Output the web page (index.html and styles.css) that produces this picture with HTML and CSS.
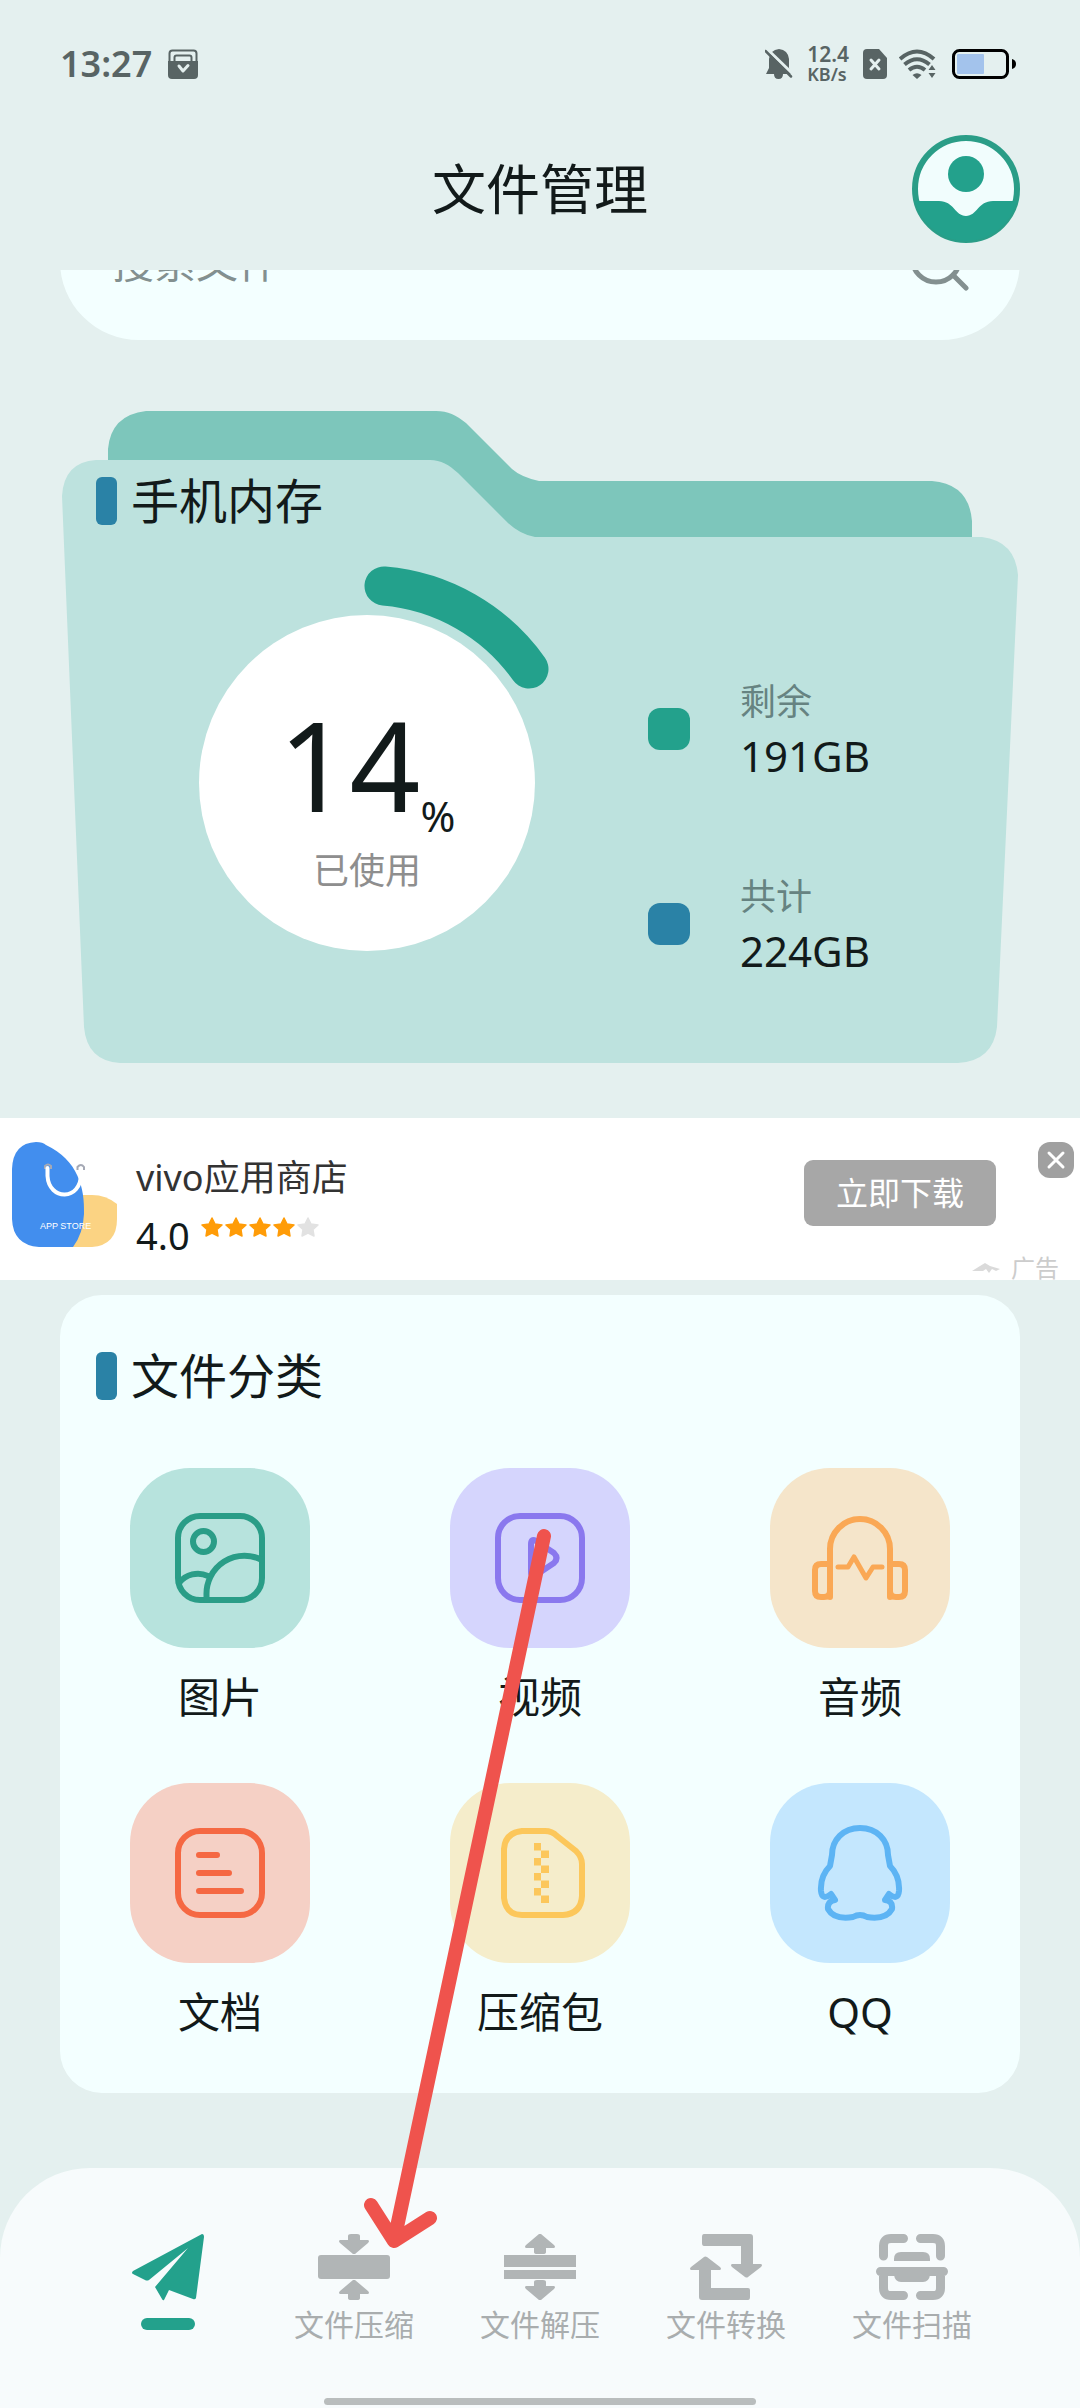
FILE: index.html
```html
<!DOCTYPE html>
<html lang="zh-CN">
<head>
<meta charset="utf-8">
<meta name="viewport" content="width=device-width, initial-scale=1">
<title>文件管理</title>
<link rel="stylesheet" href="styles.css">
</head>
<body>
<div class="page">
  <header class="top">
    <div class="status">
      <span class="time">13:27</span>
      <svg class="status-app" width="30" height="30" viewBox="0 0 30 30" aria-hidden="true">
        <path d="M1.5 14V4.5Q1.5 1.5 4.5 1.5H25.5Q28.5 1.5 28.5 4.5V14M6.5 14V8.5Q6.5 6.5 8.5 6.5H21.5Q23.5 6.5 23.5 8.5V14" fill="none" stroke="#586464" stroke-width="2"/>
        <path d="M0 12H30V26Q30 30 26 30H4Q0 30 0 26Z" fill="#586464"/>
        <path d="M11 17L15 22L20 16.5" fill="none" stroke="#e4f0ef" stroke-width="3" stroke-linecap="round" stroke-linejoin="round"/>
      </svg>
      <span class="status-space"></span>
      <svg width="28" height="30" viewBox="0 0 28 30" aria-hidden="true">
        <path d="M3 25H1L4 19V10Q5 1 14 0Q23 1 24 10V19L26 25H18Q18 30 13.5 30Q9 30 9 25Z" fill="#586464"/>
        <path d="M2 0L29 26" stroke="#e4f0ef" stroke-width="3"/>
        <path d="M0.5 2L26 27.5" stroke="#586464" stroke-width="2.5" stroke-linecap="round"/>
      </svg>
      <span class="speed"><span class="speed-value">12.4</span><span class="speed-unit">KB/s</span></span>
      <svg width="24" height="30" viewBox="0 0 24 30" aria-hidden="true">
        <path d="M4 0H16L24 9V26Q24 30 20 30H4Q0 30 0 26V4Q0 0 4 0Z" fill="#586464"/>
        <path d="M8 11L16 20M16 11L8 20" stroke="#e4f0ef" stroke-width="3" stroke-linecap="round"/>
      </svg>
      <svg width="37" height="30" viewBox="0 0 37 30" aria-hidden="true">
        <g fill="none" stroke="#586464" stroke-width="4">
          <path d="M1 10Q18 -5 35 10"/><path d="M5.500 15.500Q18 5 30.500 15.500"/><path d="M10 21Q18 14.500 26 21"/>
        </g>
        <path d="M13.500 26Q18 22.500 22.500 26L18 30ZM33 16L36.500 21H29.500ZM33 29L36.500 24H29.500Z" fill="#586464"/>
      </svg>
      <svg class="battery" width="64" height="30" viewBox="0 0 64 30" aria-hidden="true">
        <rect x="1.5" y="1.5" width="54" height="27" rx="6" fill="none" stroke="#000" stroke-width="3"/>
        <rect x="5" y="5" width="27" height="20" rx="1" fill="#a3c3ec"/>
        <path d="M60 10Q64 11 64 15Q64 19 60 20Z"/>
      </svg>
    </div>
    <div class="title-row">
      <h1 class="title">文件管理</h1>
      <button class="avatar" type="button" aria-label="个人中心">
        <svg width="108" height="108" viewBox="0 0 108 108" aria-hidden="true">
          <circle cx="54" cy="54" r="51" fill="#f1fdfd" stroke="#2a9d87" stroke-width="6"/>
          <circle cx="54" cy="39" r="18" fill="#23a18c"/>
          <path d="M3 66H27C42 66 43 81 54 81S66 66 81 66H105A52.500 52.500 0 0 1 3 66Z" fill="#23a18c"/>
        </svg>
      </button>
    </div>
  </header>

  <main class="content">
    <form class="search">
      <input class="search-input" type="search" placeholder="搜索文件" aria-label="搜索文件">
      <button class="search-button" type="submit" aria-label="搜索">
        <svg width="60" height="60" viewBox="0 0 60 60" aria-hidden="true">
          <g fill="none" stroke="#839090" stroke-width="5" stroke-linecap="round">
            <circle cx="27" cy="27" r="24"/><path d="M44 44L57 57"/>
          </g>
        </svg>
      </button>
    </form>

    <section class="folder">
      <svg class="folder-shape" viewBox="0 0 960 652" preserveAspectRatio="none" aria-hidden="true">
        <path d="M48 130V38Q51 4 86 0H376C388 0 396 4 406 12L452 58Q461 66 479 70H872Q909 73 912 110V160H48Z" fill="#7dc6bb"/>
        <path d="M2 85Q4 51 36 49H370C381 49 389 54 398 62L446 110Q459 123 475 126H922Q955 130 958 164L937 616Q933 650 898 652H60Q27 650 24 616Z" fill="#bde2de"/>
      </svg>
      <div class="folder-body">
        <h2 class="section-title">手机内存</h2>
        <div class="usage">
          <div class="gauge">
            <svg class="gauge-ring" viewBox="0 0 436 436" aria-hidden="true">
              <circle cx="218" cy="218" r="168" fill="#fff"/>
              <path d="M235 21A198 198 0 0 1 380 104" fill="none" stroke="#23a18c" stroke-width="39" stroke-linecap="round"/>
            </svg>
            <div class="gauge-text">
              <div class="percent"><span class="percent-value">14</span><span class="percent-sign">%</span></div>
              <div class="percent-label">已使用</div>
            </div>
          </div>
          <ul class="legend">
            <li class="legend-item">
              <span class="swatch swatch-free"></span>
              <span class="legend-text"><span class="legend-label">剩余</span><span class="legend-value">191GB</span></span>
            </li>
            <li class="legend-item">
              <span class="swatch swatch-total"></span>
              <span class="legend-text"><span class="legend-label">共计</span><span class="legend-value">224GB</span></span>
            </li>
          </ul>
        </div>
      </div>
    </section>

    <aside class="ad">
      <svg class="ad-logo" width="105" height="105" viewBox="0 0 105 105" aria-hidden="true">
        <path d="M50 105H80Q105 103 105 77V62Q94 53 80 53H60Z" fill="#fbd383"/>
        <path d="M0 27Q1 1 24 0Q31 0 34 3C66 18 73 46 72 72Q71 92 61 105H27Q1 103 0 77Z" fill="#428eee"/>
        <path d="M33 27V24Q36 21 39 24V27M65.500 28V25Q69 21 72 25V28" fill="none" stroke="#a5a9b5" stroke-width="2"/>
        <path d="M35.500 26V34C37 59 69 59 69 32" fill="none" stroke="#fff" stroke-width="4" stroke-linecap="round"/>
        <text class="ad-logo-text" x="28" y="87">APP STORE</text>
      </svg>
      <div class="ad-info">
        <div class="ad-name">vivo应用商店</div>
        <div class="rating">
          <span class="score">4.0</span>
          <svg class="stars" width="118" height="20" viewBox="0 0 118 20" aria-label="4 星">
            <defs><path id="star" d="M11 1L14 7L21 8L16 12.500L17 19L11 16L5 19L6 12.500L1 8L8 7Z" stroke-width="1.500" stroke-linejoin="round"/></defs>
            <g fill="#ff9c08" stroke="#ff9c08">
              <use href="#star"/><use href="#star" x="24"/><use href="#star" x="48"/><use href="#star" x="72"/>
            </g>
            <use href="#star" x="96" fill="#e2e2e2" stroke="#e2e2e2"/>
          </svg>
        </div>
      </div>
      <button class="download" type="button">立即下载</button>
      <button class="close" type="button" aria-label="关闭广告">
        <svg width="36" height="36" viewBox="0 0 36 36" aria-hidden="true"><path d="M11 11L25 25M25 11L11 25" stroke="#fff" stroke-width="3" stroke-linecap="round"/></svg>
      </button>
      <span class="ad-tag">
        <svg width="30" height="12" viewBox="0 0 30 12" aria-hidden="true"><path d="M1 9L9 4L14 1L19 4L29 7L25 9L21 7L18 11L15 7L12 9Z" fill="#dadada"/></svg>
        广告
      </span>
    </aside>

    <section class="card">
      <h2 class="section-title">文件分类</h2>
      <div class="categories">
        <button class="category" type="button">
          <span class="tile tile-image">
            <svg width="90" height="90" viewBox="0 0 90 90" aria-hidden="true">
              <rect x="3" y="3" width="84" height="84" rx="22"/>
              <circle cx="28.5" cy="28.5" r="10.5"/>
              <path d="M31.500 87V82A38 38 0 0 1 87 47M4 70A24 24 0 0 1 33 63"/>
            </svg>
          </span>
          <span class="category-name">图片</span>
        </button>
        <button class="category" type="button">
          <span class="tile tile-video">
            <svg width="90" height="90" viewBox="0 0 90 90" aria-hidden="true">
              <rect x="3" y="3" width="84" height="84" rx="22"/>
              <path d="M36 31Q36 25 41 28L59 40Q64 45 59 50L41 62Q36 64 36 59Z"/>
            </svg>
          </span>
          <span class="category-name">视频</span>
        </button>
        <button class="category" type="button">
          <span class="tile tile-audio">
            <svg width="100" height="90" viewBox="0 0 100 90" aria-hidden="true">
              <path d="M20 84V36A30 30 0 0 1 80 36V84"/>
              <path d="M20 51H11Q5 51 5 57V78Q5 84 11 84H14Q20 84 20 78M80 51H89Q95 51 95 57V78Q95 84 89 84H86Q80 84 80 78"/>
              <path d="M28 54H38L44 44L56 65L63 54H72" stroke-width="5"/>
            </svg>
          </span>
          <span class="category-name">音频</span>
        </button>
        <button class="category" type="button">
          <span class="tile tile-doc">
            <svg width="90" height="90" viewBox="0 0 90 90" aria-hidden="true">
              <rect x="3" y="3" width="84" height="84" rx="22"/>
              <path d="M24 27H42M24 45H54M24 63H66"/>
            </svg>
          </span>
          <span class="category-name">文档</span>
        </button>
        <button class="category" type="button">
          <span class="tile tile-zip">
            <svg width="90" height="90" viewBox="0 0 90 90" aria-hidden="true">
              <path d="M27 3H50Q57 3 62 8L81 23Q87 29 87 36V68Q86 86 68 87H27Q11 87 9 70V21Q10 5 27 3Z"/>
              <path class="solid" d="M39 15h7v7.500h-7zM46 22.500h8v7.500h-8zM39 30h7v7.500h-7zM46 37.500h8v7.500h-8zM39 45h7v7.500h-7zM46 52.500h8v7.500h-8zM39 60h7v7.500h-7zM46 67.500h8v7.500h-8z"/>
            </svg>
          </span>
          <span class="category-name">压缩包</span>
        </button>
        <button class="category" type="button">
          <span class="tile tile-qq">
            <svg width="90" height="100" viewBox="0 0 90 100" aria-hidden="true">
              <path d="M45 5C28 5 17 17 17 32L15 43Q5 53 6 68Q7 78 16 71L20 77Q12 78 13 86Q19 97 38 94Q45 90 52 94Q71 97 77 86Q78 78 70 77L74 71Q83 78 84 68Q85 53 75 43L73 32C73 17 62 5 45 5Z"/>
            </svg>
          </span>
          <span class="category-name">QQ</span>
        </button>
      </div>
    </section>
  </main>

  <nav class="tabs" aria-label="主导航">
    <div class="tab-row">
      <a class="tab tab-active" href="#home" aria-label="首页" aria-current="page">
        <svg width="72" height="72" viewBox="0 0 72 72" aria-hidden="true">
          <path d="M70 3Q72 3 72 6L64 67Q63 69 61 68L37 59L32 69Q31 70 30 68L23 56L56 17L17 49Q15 50 13 49L1 43Q-1 42 1 40Z"/>
        </svg>
        <span class="active-bar"></span>
      </a>
      <a class="tab" href="#compress">
        <svg width="72" height="72" viewBox="0 0 72 72" aria-hidden="true">
          <path d="M30 9V5Q30 3 33 3H39Q42 3 42 5V9H50Q52 10 50 12L37 23H35L22 12Q20 10 22 9ZM30 63V67Q30 69 33 69H39Q42 69 42 67V63H50Q52 62 50 60L37 49H35L22 60Q20 62 22 63Z"/>
          <rect y="24" width="72" height="24" rx="3"/>
        </svg>
        <span>文件压缩</span>
      </a>
      <a class="tab" href="#extract">
        <svg width="72" height="72" viewBox="0 0 72 72" aria-hidden="true">
          <path d="M30 17V21Q30 23 33 23H39Q42 23 42 21V17H50Q52 16 50 14L37 3H35L22 14Q20 16 22 17ZM30 55V51Q30 49 33 49H39Q42 49 42 51V55H50Q52 56 50 58L37 69H35L22 58Q20 56 22 55Z"/>
          <path d="M0 24H72V36H0ZM0 39H72V48H0Z"/>
        </svg>
        <span>文件解压</span>
      </a>
      <a class="tab" href="#convert">
        <svg width="72" height="72" viewBox="0 0 72 72" aria-hidden="true">
          <path d="M14 3H60Q63 3 63 6V33H71Q73 34 71 36L58 46Q57 47 55 46L42 36Q40 34 42 33H51V15H14Q12 15 12 12V6Q12 3 14 3ZM58 69H12Q9 69 9 66V39H1Q-1 38 1 36L14 26Q15 25 17 26L30 36Q32 38 30 39H21V57H58Q60 57 60 59V66Q60 69 58 69Z"/>
        </svg>
        <span>文件转换</span>
      </a>
      <a class="tab" href="#scan">
        <svg width="72" height="72" viewBox="0 0 72 72" aria-hidden="true">
          <path d="M7.500 25V15Q7.500 7.500 15 7.500H27.500M44.500 7.500H57Q64.500 7.500 64.500 15V25M7.500 41V57Q7.500 64.500 15 64.500H27.500M44.500 64.500H57Q64.500 64.500 64.500 57V41M4.500 40.500H67.500" fill="none" stroke="#b1b5b6" stroke-width="9" stroke-linecap="round"/>
          <path d="M18 30V28Q18 21 25 21H47Q54 21 54 28V30ZM18 44H54Q53 51 47 51H25Q19 51 18 44Z"/>
        </svg>
        <span>文件扫描</span>
      </a>
    </div>
    <div class="home-bar"></div>
  </nav>

  <svg class="arrow" width="190" height="722" viewBox="0 0 190 722" aria-hidden="true">
    <path d="M181 8L31 713M8 677L31 713L67 690" fill="none" stroke="#ef534d" stroke-width="14" stroke-linecap="round" stroke-linejoin="round"/>
  </svg>
</div>
</body>
</html>
```

FILE: styles.css
```css
* { box-sizing: border-box; }

body {
  margin: 0;
  background: #e4f0ef;
  color: #121a1a;
  font-family: "Noto Sans", "Noto Sans CJK SC", sans-serif;
  font-size: 42px;
}

h1, h2, ul { margin: 0; padding: 0; font-weight: 400; }
button { border: 0; padding: 0; background: none; color: inherit; font: inherit; }
svg { display: block; flex: none; }

.page {
  position: relative;
  display: flex;
  flex-direction: column;
  min-height: 100vh;
}

/* status bar and title */
.top {
  position: relative;
  z-index: 1;
  height: 270px;
  padding: 20px 60px 0;
  background: #e4f0ef;
}
.status { display: flex; align-items: center; height: 88px; color: #586464; }
.time { font-size: 36px; font-weight: 600; line-height: 48px; }
.status-app { margin-left: 16px; }
.status-space { flex: 1; }
.speed { display: flex; flex-direction: column; margin: 0 14px; font-weight: 600; }
.speed-value { font-size: 21px; line-height: 20px; }
.speed-unit { font-size: 18px; line-height: 20px; }
.status svg + svg { margin-left: 12px; }
.status .battery { margin: 0 4px 0 16px; }
.title-row { display: grid; grid-template-columns: 108px 1fr 108px; align-items: center; height: 162px; }
.title { grid-column: 2; font-size: 54px; line-height: 72px; text-align: center; }
.avatar { width: 108px; height: 108px; border-radius: 50%; }

.content { flex: 1; }
.search {
  display: flex;
  align-items: center;
  height: 158px;
  margin: -88px 60px 0;
  padding: 0 51px 0 52px;
  border-radius: 79px;
  background: #f3ffff;
}
.search-input {
  flex: 1;
  min-width: 0;
  height: 60px;
  border: 0;
  padding: 0;
  background: none;
  font: inherit;
}
.search-input::placeholder { color: #839090; opacity: 1; }

.section-title {
  display: flex;
  align-items: center;
  gap: 14px;
  padding-left: 36px;
  font-size: 48px;
  line-height: 72px;
}
.section-title::before {
  content: "";
  width: 21px;
  height: 48px;
  border-radius: 6px;
  background: #2a82a6;
}

/* storage folder */
.folder { display: grid; margin: 71px 60px 0; }
.folder-shape, .folder-body { grid-area: 1 / 1; }
.folder-shape { width: 100%; height: 100%; min-height: 0; }
.folder-body { z-index: 0; padding: 54px 0 62px; }
.usage { display: flex; align-items: flex-end; gap: 63px; margin: 28px 0 0 89px; }
.gauge { display: grid; flex: none; width: 436px; height: 436px; }
.gauge-ring, .gauge-text { grid-area: 1 / 1; }
.gauge-text { z-index: 0; padding-top: 119px; text-align: center; }
.percent { display: flex; align-items: flex-end; justify-content: center; height: 160px; }
.percent-value { font-size: 124px; line-height: 160px; }
.percent-sign { font-size: 42px; line-height: 56px; }
.percent-label { color: #8e8e8e; font-size: 36px; line-height: 54px; }
.legend { display: grid; gap: 87px; padding-bottom: 23px; list-style: none; }
.legend-item { display: flex; align-items: center; gap: 50px; }
.swatch { width: 42px; height: 42px; border-radius: 12px; }
.swatch-free { background: #23a18c; }
.swatch-total { background: #2a82a6; }
.legend-text { display: grid; line-height: 54px; }
.legend-label { color: #668381; font-size: 36px; }

/* advertisement */
.ad {
  position: relative;
  display: flex;
  align-items: flex-start;
  height: 162px;
  margin-top: 55px;
  padding: 24px 6px 0 12px;
  background: #fff;
}
.ad-logo-text { fill: #fff; font-family: "Liberation Sans", sans-serif; font-size: 9px; }
.ad-info { flex: 1; padding: 9px 0 0 19px; }
.ad-name { color: #333; font-size: 36px; line-height: 54px; }
.rating { display: flex; align-items: center; gap: 11px; line-height: 60px; }
.score { font-size: 38px; }
.stars { margin-bottom: 16px; }
.download {
  width: 192px;
  height: 66px;
  margin: 18px 42px 0 0;
  border-radius: 9px;
  background: #a7a7a7;
  color: #fff;
  font-size: 32px;
  line-height: 66px;
}
.close { border-radius: 12px; background: #a0a0a0; }
.ad-tag {
  position: absolute;
  right: 21px;
  bottom: 0;
  display: flex;
  align-items: center;
  gap: 10px;
  color: #ccc;
  font-size: 24px;
  line-height: 24px;
}

/* file categories */
.card {
  margin: 15px 60px 0;
  padding: 45px 0 51px;
  border-radius: 42px;
  background: #f3ffff;
}
.categories { display: grid; grid-template-columns: repeat(3, 1fr); row-gap: 56px; margin-top: 56px; }
.category { display: flex; flex-direction: column; align-items: center; gap: 19px; }
.category-name { line-height: 60px; }
.tile { display: grid; place-items: center; width: 180px; height: 180px; border-radius: 60px; }
.tile svg { fill: none; stroke: currentColor; stroke-width: 6; stroke-linecap: round; stroke-linejoin: round; }
.tile .solid { fill: currentColor; stroke: none; }
.tile-image { background: #b7e3dd; color: #2a9d87; }
.tile-video { background: #d5d5fd; color: #8a78ee; }
.tile-audio { background: #f5e5ca; color: #faa855; }
.tile-doc { background: #f5d0c5; color: #f56843; }
.tile-zip { background: #f5edcb; color: #fcc75b; }
.tile-qq { background: #c4e7fe; color: #5db4f4; }

/* bottom navigation */
.tabs {
  height: 240px;
  margin-top: 75px;
  padding-top: 63px;
  border-radius: 90px 90px 0 0;
  background: #f7fbfc;
}
.tab-row { display: grid; grid-template-columns: repeat(5, 1fr); height: 167px; padding: 0 75px; }
.tab {
  display: flex;
  flex-direction: column;
  align-items: center;
  color: #a9adae;
  font-size: 30px;
  line-height: 44px;
  text-decoration: none;
}
.tab svg { fill: #b1b5b6; }
.tab-active svg { fill: #23a18c; overflow: visible; }
.active-bar { width: 54px; height: 12px; margin-top: 15px; border-radius: 6px; background: #23a18c; }
.home-bar { width: 40%; height: 7px; margin: 0 auto; border-radius: 4px; background: #b9bdbd; }

/* hand-drawn arrow over the page */
.arrow { position: absolute; z-index: 2; top: 1528px; left: 50%; margin-left: -177px; }
```
